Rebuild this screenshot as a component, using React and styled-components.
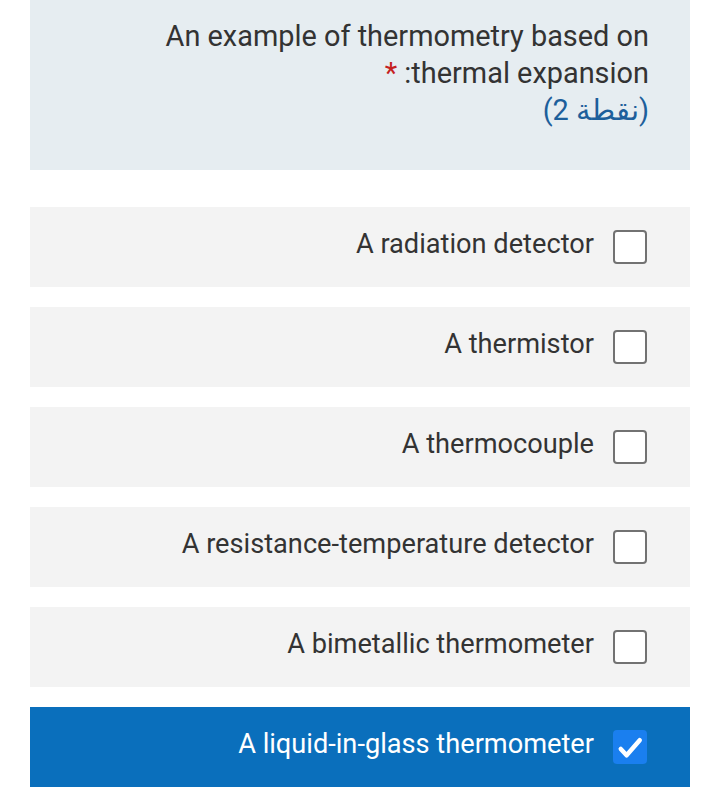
import React, { useState } from "react";
import styled, { createGlobalStyle } from "styled-components";

const options = [
  "A radiation detector",
  "A thermistor",
  "A thermocouple",
  "A resistance-temperature detector",
  "A bimetallic thermometer",
  "A liquid-in-glass thermometer",
];

const App = () => {
  const [checked, setChecked] = useState([5]);

  const toggle = (i) => {
    setChecked((prev) =>
      prev.includes(i) ? prev.filter((x) => x !== i) : [...prev, i]
    );
  };

  return (
    <Page>
      <GlobalStyle />
      <Question>
        <Title>
          An example of thermometry based on
          <br />
          thermal expansion: <Star>*</Star>
        </Title>
        <Points>
          (2 <bdi>نقطة</bdi>)
        </Points>
      </Question>
      <List>
        {options.map((label, i) => {
          const on = checked.includes(i);
          return (
            <Option key={label} $selected={on} onClick={() => toggle(i)}>
              <Label>{label}</Label>
              <Box $selected={on}>
                {on && (
                  <svg width="35" height="35" viewBox="0 0 35 35">
                    <polyline
                      points="8,19 14,25.5 27.5,10"
                      fill="none"
                      stroke="#fff"
                      strokeWidth="4.6"
                      strokeLinecap="round"
                      strokeLinejoin="round"
                    />
                  </svg>
                )}
              </Box>
            </Option>
          );
        })}
      </List>
    </Page>
  );
};

const GlobalStyle = createGlobalStyle`
  body {
    margin: 0;
    background: #ffffff;
    font-family: Roboto, "Liberation Sans", sans-serif;
  }
`;

const Page = styled.div`
  width: 660px;
  margin: 0 30px;
  display: flex;
  flex-direction: column;
`;

const Question = styled.div`
  background: #e6edf1;
  padding: 18px 41px 42px 41px;
  text-align: right;
  font-size: 28.9px;
  line-height: 37px;
  color: #333333;
  height: 170px;
  box-sizing: border-box;
`;

const Title = styled.div`
  direction: rtl;
`;

const Star = styled.span`
  color: #c5221f;
`;

const Points = styled.div`
  direction: ltr;
  color: #1d5f9b;
  font-family: Roboto, "Noto Sans", sans-serif;
`;

const List = styled.div`
  display: flex;
  flex-direction: column;
  gap: 20px;
  margin-top: 37px;
`;

const Option = styled.div`
  height: 80px;
  display: flex;
  align-items: center;
  justify-content: flex-end;
  gap: 19px;
  padding-right: 43px;
  background: ${(p) => (p.$selected ? "#0a6fbc" : "#f3f3f3")};
  color: ${(p) => (p.$selected ? "#ffffff" : "#333333")};
  cursor: pointer;
`;

const Label = styled.span`
  font-size: 27.2px;
  line-height: 30px;
  margin-top: -6px;
`;

const Box = styled.span`
  width: 34px;
  height: 34px;
  box-sizing: border-box;
  border-radius: 4px;
  border: ${(p) => (p.$selected ? "none" : "2px solid #727272")};
  background: ${(p) => (p.$selected ? "#1a7fef" : "#ffffff")};
  display: flex;
  align-items: center;
  justify-content: center;
  overflow: hidden;
`;

export default App;
